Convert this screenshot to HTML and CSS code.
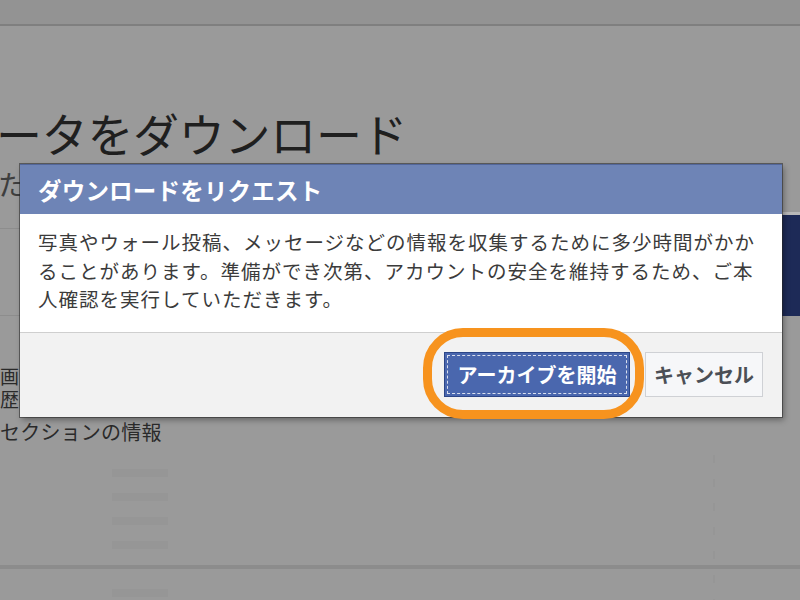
FILE: index.html
```html
<!DOCTYPE html>
<html lang="ja">
<head>
<meta charset="utf-8">
<link rel="stylesheet" href="styles.css">
</head>
<body>
<div class="page">
  <div class="topbar"></div>
  <div class="content">
    <h1 class="heading">ータをダウンロード</h1>
    <div class="sub">た</div>
    <div class="rule r1"></div>
    <div class="rule r2"></div>
    <ul class="items">
      <li class="it1">画</li>
      <li class="it2">歴</li>
      <li class="it3">セクションの情報</li>
    </ul>
    <div class="rows">
      <div class="ghost"></div>
      <div class="ghost"></div>
      <div class="ghost"></div>
      <div class="ghost"></div>
      <div class="divider"></div>
      <div class="ghost"></div>
    </div>
  </div>
  <div class="vdash"></div>
  <div class="behind"></div>

  <div class="dialog">
    <div class="dlg-head">ダウンロードをリクエスト</div>
    <div class="dlg-body">写真やウォール投稿、メッセージなどの情報を収集するために多少時間がかか<br>ることがあります。準備ができ次第、アカウントの安全を維持するため、ご本<br>人確認を実行していただきます。</div>
    <div class="dlg-foot">
      <div class="ring-wrap">
        <button class="btn primary"><span class="focus">アーカイブを開始</span></button>
      </div>
      <button class="btn cancel">キャンセル</button>
    </div>
  </div>
</div>
</body>
</html>
```

FILE: styles.css
```css
html, body {
  margin: 0;
  padding: 0;
}
body {
  width: 800px;
  height: 600px;
  overflow: hidden;
  background: #9a9a9a;
  font-family: "Noto Sans CJK JP", "Noto Sans", sans-serif;
}
.page {
  position: relative;
  width: 800px;
  height: 600px;
}
.topbar {
  height: 24px;
  background: #939393;
  border-bottom: 2px solid #7f7f7f;
}
.content {
  padding-left: 0;
}
.heading {
  margin: 0;
  padding-top: 74px;
  font-size: 46px;
  font-weight: 400;
  line-height: 64px;
  color: #1f1f1f;
  letter-spacing: -0.3px;
  margin-left: -4px;
}
.sub {
  font-size: 28px;
  line-height: 40px;
  color: #3e3e3e;
  margin-left: -2px;
}
.rule {
  height: 1px;
  background: #8d8d8d;
  width: 30px;
}
.r1 { margin-top: 24px; }
.r2 { margin-top: 86px; }
.items {
  list-style: none;
  margin: 48px 0 0;
  padding: 0;
  font-size: 19px;
  color: #2a2a2a;
}
.items li {
  line-height: 24px;
  height: 24px;
  overflow: hidden;
}
.it2 {
  margin-top: -1px;
}
.it3 {
  margin-top: 9px;
  font-size: 20px;
  letter-spacing: 0.2px;
  height: 28px;
  line-height: 28px;
}
.rows {
  margin-top: 25px;
}
.ghost {
  width: 56px;
  height: 8px;
  margin-left: 112px;
  margin-bottom: 16px;
  background: #969696;
}
.divider {
  height: 4px;
  background: #8c8c8c;
  margin: 0 0 20px;
}
.vdash {
  position: absolute;
  left: 713px;
  top: 455px;
  width: 2px;
  height: 145px;
  background: repeating-linear-gradient(#969696 0 8px, transparent 8px 24px);
}
.behind {
  position: absolute;
  left: 772px;
  top: 212px;
  width: 28px;
  height: 101px;
  background: #1d2a57;
  border-top: 3px solid #b9b9b9;
}
.dialog {
  position: absolute;
  left: 20px;
  top: 164px;
  width: 762px;
  height: 253px;
  display: flex;
  flex-direction: column;
  background: #fff;
  box-shadow: 0 0 0 1px rgba(40, 40, 40, 0.55), 2px 3px 6px rgba(0, 0, 0, 0.35);
}
.dlg-head {
  height: 50px;
  background: #6e84b6;
  border-top: 1px solid #52669a;
  box-sizing: border-box;
  color: #fff;
  font-weight: 700;
  font-size: 23.5px;
  line-height: 50px;
  padding-left: 18px;
  letter-spacing: 0.2px;
}
.dlg-body {
  height: 118px;
  box-sizing: border-box;
  padding: 14px 0 0 18px;
  font-size: 19.5px;
  line-height: 28.5px;
  color: #3b3b3b;
  letter-spacing: 1px;
  white-space: nowrap;
}
.dlg-foot {
  flex: 1;
  background: #f2f2f2;
  border-top: 1px solid #cfcfcf;
  display: flex;
  justify-content: flex-end;
  align-items: flex-start;
  padding: 19px 19px 0 0;
  gap: 15px;
}
.ring-wrap {
  position: relative;
}
.ring-wrap::before {
  content: "";
  position: absolute;
  left: -21px;
  right: -14px;
  top: -24px;
  bottom: -22px;
  border: 9px solid #f7931e;
  border-radius: 40px;
  pointer-events: none;
}
.btn {
  font-family: "Noto Sans CJK JP", "Noto Sans", sans-serif;
  font-weight: 700;
  font-size: 20px;
  height: 45px;
  box-sizing: border-box;
  margin: 0;
  cursor: pointer;
}
.primary {
  width: 186px;
  padding: 2px;
  background: #4a67ae;
  border: 1px solid #2c4687;
  color: #fff;
  display: flex;
}
.focus {
  flex: 1;
  border: 1px dashed rgba(255, 255, 255, 0.8);
  display: flex;
  align-items: center;
  justify-content: center;
  line-height: 1;
}
.cancel {
  width: 118px;
  background: #f6f7f9;
  border: 1px solid #cfd1d5;
  color: #4b4f56;
  padding: 0;
}
```
